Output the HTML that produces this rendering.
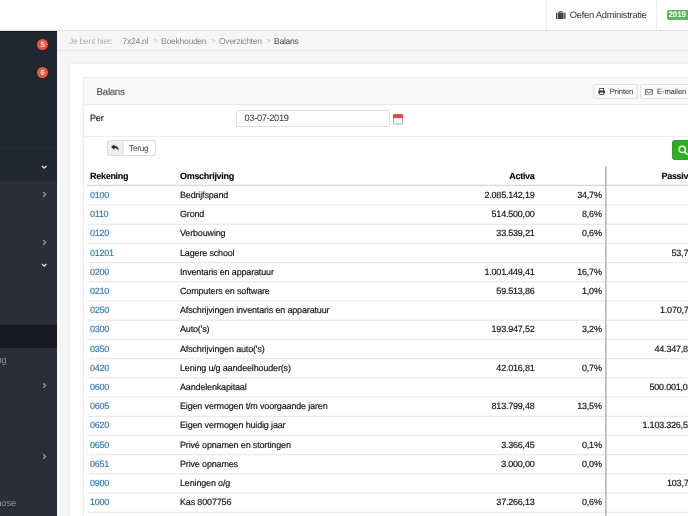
<!DOCTYPE html>
<html lang="nl">
<head>
<meta charset="utf-8">
<title>Balans</title>
<style>
*{box-sizing:border-box;margin:0;padding:0}
html,body{width:688px;height:516px;overflow:hidden;background:#f5f5f5}
body{will-change:transform;text-rendering:geometricPrecision;font-family:"Liberation Sans",sans-serif;font-size:9px;letter-spacing:-0.16px;color:#111;position:relative}
.abs{position:absolute}
#topbar{left:0;top:0;width:688px;height:31px;background:#fff;border-bottom:1px solid #e0e0e0}
#topbar .sep{top:0;width:1px;height:30px;background:#eee}
#admin{left:569.7px;top:9px;font-size:9.4px;color:#333;white-space:nowrap;line-height:12px;letter-spacing:-0.26px}
#year{left:666.5px;top:9.5px;width:30px;height:10.5px;background:#5cb85c;border-radius:2px;color:#fff;font-weight:700;font-size:8.1px;line-height:10.5px;padding-left:2px;letter-spacing:-0.15px}
#sidebar{left:0;top:31px;width:57px;height:485px;background:#2b2e38;overflow:hidden}
#sidebar .top{left:0;top:0;width:57px;height:150px;background:#22262e;border-top:1px solid #15171b}
#sidebar .line{left:0;top:117px;width:57px;height:1px;background:#292d35}
#sidebar .active{left:0;top:294px;width:57px;height:23px;background:#181a1f}
.badge{width:11px;height:11px;border-radius:50%;background:#e8573f;color:#fff;font-size:7.6px;font-weight:700;text-align:center;line-height:11px;letter-spacing:0}
.stext{color:#8a8f9c;font-size:9.4px;white-space:nowrap;line-height:12px}
#crumbbar{left:57px;top:31px;width:631px;height:19.5px;background:#f6f6f6;border-bottom:1px solid #e9e9e9}
#crumb{left:69px;top:34.6px;line-height:12px;white-space:nowrap;font-size:8.5px;color:#b2b2b2;letter-spacing:-0.24px}
#crumb span{position:absolute;top:0}
#crumb .gt{color:#bdbdbd;font-size:7px;top:1.7px;left:0}
#outer{left:69px;top:63px;width:640px;height:470px;background:#fff;border:1px solid #f0f0f0}
#panel{left:83px;top:77px;width:640px;height:460px;background:#fff;border:1px solid #ebebeb}
#phead{left:0;top:0;width:640px;height:26.5px;background:#f9f9f9;border-bottom:1px solid #e7e7e7}
#ptitle{left:12.6px;top:8.6px;font-size:9.7px;color:#4a4a4a;line-height:12px;letter-spacing:-0.28px;-webkit-text-stroke-width:0.1px}
.btn{border:1px solid #e0e0e0;border-radius:2px;background:#fafafa;height:14.5px;font-size:7.6px;color:#2a2a2a;line-height:12.5px;white-space:nowrap;letter-spacing:-0.1px}
#formrow{left:0;top:27px;width:640px;height:31.5px;border-bottom:1px solid #eee}
#per{left:90px;top:112.2px;line-height:12px;-webkit-text-stroke-width:0.16px}
#date{left:236px;top:110px;width:154px;height:17px;border:1px solid #dedede;border-radius:1.5px;background:#fff;padding-left:7.6px;line-height:15px;font-size:9.3px;color:#333;letter-spacing:-0.36px}
#terug{left:106.6px;top:139.6px;width:49.2px;height:16.4px;border:1px solid #dedede;border-radius:2px;background:#fff;overflow:hidden}
#terug .ic{left:0;top:0;width:16px;height:16px;background:#efefef;border-right:1px solid #e6e6e6}
#terug .tx{left:21.4px;top:1px;font-size:8.3px;line-height:12px;color:#444;letter-spacing:-0.25px}
#search{left:672px;top:140px;width:30px;height:20px;background:#2eb026;border-radius:2.5px;border:1px solid #2aa322}
#thead{left:87px;top:166px;width:620px;height:20px;font-weight:700;color:#000;letter-spacing:-0.3px;-webkit-text-stroke-width:0.1px}
#thead .c{top:3.6px}
.row{position:absolute;left:87px;width:620px;height:19.2px;-webkit-text-stroke-width:0.16px}
.c{position:absolute;top:0;line-height:12px;white-space:nowrap}
.row .c{top:3.05px}
.c1{left:3px;color:#337ab7;letter-spacing:-0.28px}
.c2{left:93px}
.c3{right:172.5px;text-align:right;letter-spacing:-0.21px}
.c4{right:105.3px;text-align:right;letter-spacing:-0.2px}
.c5{letter-spacing:-0.21px}
</style>
</head>
<body>
<div id="topbar" class="abs">
  <div class="sep abs" style="left:546px"></div>
  <div class="sep abs" style="left:656px"></div>
  <svg class="abs" style="left:556px;top:11px" width="9.5" height="8" viewBox="0 0 19 16"><path fill="#444" d="M6 3V1.5C6 .7 6.7 0 7.5 0h4c.8 0 1.5.7 1.5 1.5V3h-1.6V1.6H7.6V3z"/><rect x="0" y="3" width="2.6" height="13" rx="1" fill="#444"/><rect x="3.8" y="3" width="11.4" height="13" fill="#444"/><rect x="16.4" y="3" width="2.6" height="13" rx="1" fill="#444"/></svg>
  <div id="admin" class="abs">Oefen Administratie</div>
  <div id="year" class="abs">2019</div>
</div>

<div id="sidebar" class="abs">
  <div class="top abs"></div>
  <div class="line abs"></div>
  <div class="active abs"></div>
  <div class="badge abs" style="left:37px;top:8px">5</div>
  <div class="badge abs" style="left:37px;top:36.2px">6</div>
  <svg class="abs" style="left:41px;top:134px" width="6.4" height="4.6" viewBox="0 0 7 5"><path d="M1 1l2.5 2.5L6 1" fill="none" stroke="#f0f0f0" stroke-width="1.3"/></svg>
  <svg class="abs" style="left:42px;top:160px" width="5" height="7" viewBox="0 0 5 7"><path d="M1.2 1.3l2.3 2.2L1.2 5.7" fill="none" stroke="#8a91a1" stroke-width="1.4"/></svg>
  <svg class="abs" style="left:42px;top:207.5px" width="5" height="7" viewBox="0 0 5 7"><path d="M1.2 1.3l2.3 2.2L1.2 5.7" fill="none" stroke="#8a91a1" stroke-width="1.4"/></svg>
  <svg class="abs" style="left:41px;top:232px" width="6.4" height="4.6" viewBox="0 0 7 5"><path d="M1 1l2.5 2.5L6 1" fill="none" stroke="#f0f0f0" stroke-width="1.3"/></svg>
  <div class="stext abs" style="right:50.5px;top:323px">Instelling</div>
  <svg class="abs" style="left:42px;top:350.5px" width="5" height="7" viewBox="0 0 5 7"><path d="M1.2 1.3l2.3 2.2L1.2 5.7" fill="none" stroke="#8a91a1" stroke-width="1.4"/></svg>
  <svg class="abs" style="left:42px;top:422px" width="5" height="7" viewBox="0 0 5 7"><path d="M1.2 1.3l2.3 2.2L1.2 5.7" fill="none" stroke="#8a91a1" stroke-width="1.4"/></svg>
  <div class="stext abs" style="right:41px;top:466px">Diagnose</div>
</div>

<div id="crumbbar" class="abs"></div>
<div id="crumb" class="abs">
  <span style="left:0">Je bent hier:</span>
  <span style="left:53.5px;color:#888">7x24.nl</span>
  <span class="gt" style="left:84.5px">&gt;</span>
  <span style="left:92px;color:#888">Boekhouden</span>
  <span class="gt" style="left:142.5px">&gt;</span>
  <span style="left:150px;color:#888">Overzichten</span>
  <span class="gt" style="left:197.5px">&gt;</span>
  <span style="left:205px;color:#444">Balans</span>
</div>

<div id="outer" class="abs"></div>
<div id="panel" class="abs">
  <div id="phead" class="abs"></div>
  <div id="ptitle" class="abs">Balans</div>
  <div id="formrow" class="abs"></div>
</div>
<div class="btn abs" style="left:593px;top:84px;width:45px">
  <svg class="abs" style="left:4.2px;top:3.4px" width="7.4" height="6.8" viewBox="0 0 15 14"><rect x="0.5" y="5" width="14" height="6" rx="1.2" fill="#3a3a3a"/><rect x="3.4" y="0.9" width="8.2" height="5" fill="#fafafa" stroke="#333" stroke-width="1.5"/><rect x="3.4" y="8.3" width="8.2" height="4.8" fill="#fafafa" stroke="#333" stroke-width="1.5"/></svg>
  <span class="abs" style="left:15.8px;top:0.8px">Printen</span>
</div>
<div class="btn abs" style="left:640px;top:84px;width:60px">
  <svg class="abs" style="left:4.4px;top:3.6px" width="7.8" height="6.4" viewBox="0 0 16 13"><rect x="0.9" y="0.9" width="14.2" height="11.2" rx="1.6" fill="none" stroke="#333" stroke-width="1.6"/><path d="M1.2 3.2L8 8.2l6.8-5" fill="none" stroke="#333" stroke-width="1.5"/></svg>
  <span class="abs" style="left:16px;top:0.8px">E-mailen</span>
</div>

<div id="per" class="abs">Per</div>
<div id="date" class="abs">03-07-2019</div>
<svg class="abs" style="left:392.7px;top:114px" width="10.2" height="10.6" viewBox="0 0 20 21"><rect x="0.8" y="1" width="18.4" height="19" rx="1.5" fill="#f0fbfb" stroke="#9a9a9a" stroke-width="1.6"/><path d="M0 2.5C0 1.4 1 .5 2 .5h16c1 0 2 .9 2 2V8.5H0z" fill="#ee4444"/><rect x="4.2" y="1.2" width="2" height="3.6" rx="1" fill="#a66"/><rect x="13.8" y="1.2" width="2" height="3.6" rx="1" fill="#a66"/><rect x="2" y="8.5" width="16" height="1" fill="#fff"/></svg>
<div id="terug" class="abs"><div class="ic abs"><svg class="abs" style="left:3.5px;top:3.3px" width="8.2" height="7" viewBox="0 0 16.4 14"><path fill="#2e2e2e" d="M6.6 .3L.2 5.9l6.4 5.6V8.4c3.9 0 6.7 1 8.4 5.2 1.3-5.8-2.3-10-8.4-10.2z"/></svg></div><div class="tx abs">Terug</div></div>
<div id="search" class="abs"><svg class="abs" style="left:3px;top:2px" width="16" height="16" viewBox="0 0 16 16"><circle cx="6.3" cy="6.4" r="3.15" fill="none" stroke="#fff" stroke-width="1.35"/><path d="M8.7 8.8L11.3 11.4" stroke="#fff" stroke-width="1.35" stroke-linecap="round"/></svg></div>

<svg id="lines" class="abs" style="left:0;top:0" width="688" height="516" viewBox="0 0 688 516">
<rect x="87" y="184.7" width="601" height="1.4" fill="#d8d8d8"/>
<rect x="87" y="204.5" width="601" height="1.1" fill="#e6e6e6"/>
<rect x="87" y="223.71" width="601" height="1.1" fill="#e6e6e6"/>
<rect x="87" y="242.91" width="601" height="1.1" fill="#e6e6e6"/>
<rect x="87" y="262.12" width="601" height="1.1" fill="#e6e6e6"/>
<rect x="87" y="281.33" width="601" height="1.1" fill="#e6e6e6"/>
<rect x="87" y="300.54" width="601" height="1.1" fill="#e6e6e6"/>
<rect x="87" y="319.74" width="601" height="1.1" fill="#e6e6e6"/>
<rect x="87" y="338.95" width="601" height="1.1" fill="#e6e6e6"/>
<rect x="87" y="358.16" width="601" height="1.1" fill="#e6e6e6"/>
<rect x="87" y="377.36" width="601" height="1.1" fill="#e6e6e6"/>
<rect x="87" y="396.57" width="601" height="1.1" fill="#e6e6e6"/>
<rect x="87" y="415.78" width="601" height="1.1" fill="#e6e6e6"/>
<rect x="87" y="434.98" width="601" height="1.1" fill="#e6e6e6"/>
<rect x="87" y="454.19" width="601" height="1.1" fill="#e6e6e6"/>
<rect x="87" y="473.4" width="601" height="1.1" fill="#e6e6e6"/>
<rect x="87" y="492.61" width="601" height="1.1" fill="#e6e6e6"/>
<rect x="87" y="511.81" width="601" height="1.1" fill="#e6e6e6"/>
<rect x="87" y="531.02" width="601" height="1.1" fill="#e6e6e6"/>
<rect x="604.95" y="166.1" width="1.75" height="350" fill="#bcbcbc"/>
</svg>
<div id="thead" class="abs">
  <div class="c c1" style="color:#000">Rekening</div>
  <div class="c c2">Omschrijving</div>
  <div class="c c3" style="letter-spacing:-0.3px">Activa</div>
  <div class="c" style="left:574.5px">Passiva</div>
</div>
<div id="rows">
<div class="row" style="top:185.85px"><a class="c c1">0100</a><span class="c c2">Bedrijfspand</span><span class="c c3">2.085.142,19</span><span class="c c4">34,7%</span></div>
<div class="row" style="top:205.06px"><a class="c c1">0110</a><span class="c c2">Grond</span><span class="c c3">514.500,00</span><span class="c c4">8,6%</span></div>
<div class="row" style="top:224.26px"><a class="c c1">0120</a><span class="c c2">Verbouwing</span><span class="c c3">33.539,21</span><span class="c c4">0,6%</span></div>
<div class="row" style="top:243.47px"><a class="c c1">01201</a><span class="c c2">Lagere school</span><span class="c c5" style="left:584.5px">53,70</span></div>
<div class="row" style="top:262.68px"><a class="c c1">0200</a><span class="c c2">Inventaris en apparatuur</span><span class="c c3">1.001.449,41</span><span class="c c4">16,7%</span></div>
<div class="row" style="top:281.88px"><a class="c c1">0210</a><span class="c c2">Computers en software</span><span class="c c3">59.513,86</span><span class="c c4">1,0%</span></div>
<div class="row" style="top:301.09px"><a class="c c1">0250</a><span class="c c2">Afschrijvingen inventaris en apparatuur</span><span class="c c5" style="left:573px">1.070,70</span></div>
<div class="row" style="top:320.30px"><a class="c c1">0300</a><span class="c c2">Auto('s)</span><span class="c c3">193.947,52</span><span class="c c4">3,2%</span></div>
<div class="row" style="top:339.51px"><a class="c c1">0350</a><span class="c c2">Afschrijvingen auto('s)</span><span class="c c5" style="left:567.5px">44.347,80</span></div>
<div class="row" style="top:358.71px"><a class="c c1">0420</a><span class="c c2">Lening u/g aandeelhouder(s)</span><span class="c c3">42.016,81</span><span class="c c4">0,7%</span></div>
<div class="row" style="top:377.92px"><a class="c c1">0600</a><span class="c c2">Aandelenkapitaal</span><span class="c c5" style="left:562.5px">500.001,00</span></div>
<div class="row" style="top:397.13px"><a class="c c1">0605</a><span class="c c2">Eigen vermogen t/m voorgaande jaren</span><span class="c c3">813.799,48</span><span class="c c4">13,5%</span></div>
<div class="row" style="top:416.33px"><a class="c c1">0620</a><span class="c c2">Eigen vermogen huidig jaar</span><span class="c c5" style="left:555.5px">1.103.326,50</span></div>
<div class="row" style="top:435.54px"><a class="c c1">0650</a><span class="c c2">Privé opnamen en stortingen</span><span class="c c3">3.366,45</span><span class="c c4">0,1%</span></div>
<div class="row" style="top:454.75px"><a class="c c1">0651</a><span class="c c2">Prive opnames</span><span class="c c3">3.000,00</span><span class="c c4">0,0%</span></div>
<div class="row" style="top:473.96px"><a class="c c1">0900</a><span class="c c2">Leningen o/g</span><span class="c c5" style="left:580px">103,70</span></div>
<div class="row" style="top:493.16px"><a class="c c1">1000</a><span class="c c2">Kas 8007756</span><span class="c c3">37.266,13</span><span class="c c4">0,6%</span></div>
<div class="row" style="top:512.37px"><a class="c c1">1010</a><span class="c c2">Kas 2</span></div>
</div>
</body>
</html>
